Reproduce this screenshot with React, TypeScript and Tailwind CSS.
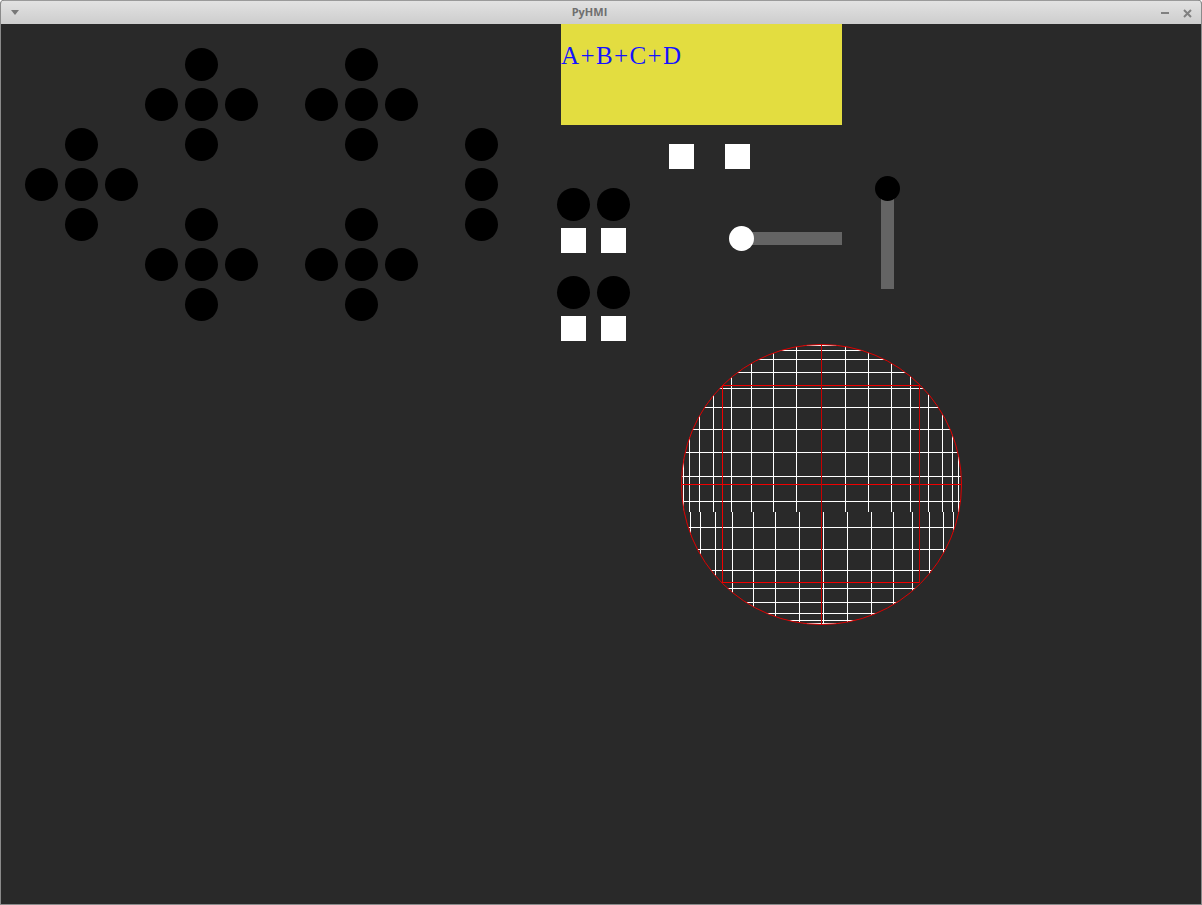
const upperV = [683, 689, 699, 713, 731, 751, 773, 796, 845, 868, 891, 910, 928, 942, 952, 958];
const lowerV = [690, 700, 715, 732, 753, 775, 799, 823, 847, 871, 893, 912, 929, 943, 953];
const whiteH = [345, 350, 359, 372, 388, 407, 429, 452, 476, 501, 527, 549, 570, 588, 602, 613, 620, 623];

function Dot() {
  return <div className="w-[33px] h-[33px] rounded-full bg-black"></div>;
}

function Square() {
  return <div className="w-[25px] h-[25px] bg-white"></div>;
}

function Cross({ className }: { className: string }) {
  return (
    <div className={`absolute grid grid-cols-3 gap-[7px] ${className}`}>
      <div></div>
      <Dot />
      <div></div>
      <Dot />
      <Dot />
      <Dot />
      <div></div>
      <Dot />
      <div></div>
    </div>
  );
}

function ButtonPair({ className }: { className: string }) {
  return (
    <div className={`absolute grid grid-cols-2 gap-[7px] justify-items-center ${className}`}>
      <Dot />
      <Dot />
      <Square />
      <Square />
    </div>
  );
}

// viewBox uses the coordinates of the full window, canvas origin is at 1,24
function Gauge() {
  return (
    <svg className="absolute left-[679px] top-[319px]" width="284" height="284" viewBox="680 343 284 284">
      <defs>
        <clipPath id="dial">
          <circle cx="821.5" cy="484.5" r="140" />
        </clipPath>
      </defs>
      <g clipPath="url(#dial)" shapeRendering="crispEdges" strokeWidth="1">
        {whiteH.map((y) => (
          <line key={y} x1="680" x2="964" y1={y + 0.5} y2={y + 0.5} stroke="#ffffff" />
        ))}
        {upperV.map((x) => (
          <line key={x} x1={x + 0.5} x2={x + 0.5} y1="343" y2="512" stroke="#ffffff" />
        ))}
        {lowerV.map((x) => (
          <line key={x} x1={x + 0.5} x2={x + 0.5} y1="512" y2="627" stroke="#ffffff" />
        ))}
        <line x1="680" x2="964" y1="484.5" y2="484.5" stroke="#f00000" />
        <line x1="722" x2="920" y1="385.5" y2="385.5" stroke="#f00000" />
        <line x1="722" x2="920" y1="582.5" y2="582.5" stroke="#f00000" />
        <line x1="722.5" x2="722.5" y1="385" y2="583" stroke="#f00000" />
        <line x1="919.5" x2="919.5" y1="385" y2="583" stroke="#c80000" />
        <line x1="821.5" x2="821.5" y1="343" y2="627" stroke="#c80000" />
      </g>
      <circle cx="821.5" cy="484.5" r="140" fill="none" stroke="#e00000" strokeWidth="1" />
    </svg>
  );
}

export default function App() {
  return (
    <div className="w-[1202px] h-[905px] flex flex-col overflow-hidden rounded-t-[4px] border border-t-0 border-[#8a8a8a] bg-[#292929] font-['Open_Sans',sans-serif]">
      {/* Title bar */}
      <div className="relative h-[24px] shrink-0 flex items-center justify-center border-t border-[#9a9a9a] bg-gradient-to-b from-[#e2e2e2] to-[#cdcdcd]">
        <div className="absolute left-[10px] top-[9px] w-0 h-0 border-x-[4px] border-t-[5px] border-x-transparent border-t-[#777777]"></div>
        <span className="ml-[-23px] text-[11px] font-bold text-[#6f6f6f]">PyHMI</span>
        <div className="absolute right-[32px] top-[11px] w-[8px] h-[2px] bg-[#808080]"></div>
        <svg className="absolute right-[9px] top-[8px]" width="9" height="9" viewBox="0 0 9 9">
          <path d="M1 1 L8 8 M8 1 L1 8" stroke="#808080" strokeWidth="2" />
        </svg>
      </div>

      {/* Canvas */}
      <div className="relative flex-1">
        <Cross className="left-[144px] top-[24px]" />
        <Cross className="left-[304px] top-[24px]" />
        <Cross className="left-[24px] top-[104px]" />
        <Cross className="left-[144px] top-[184px]" />
        <Cross className="left-[304px] top-[184px]" />

        <div className="absolute left-[464px] top-[104px] flex flex-col gap-[7px]">
          <Dot />
          <Dot />
          <Dot />
        </div>

        <div className="absolute left-[560px] top-0 w-[281px] h-[101px] bg-[#e3dd40] pt-[17px] font-['Liberation_Serif',serif] text-[25px] leading-[30px] tracking-[1.4px] text-[#1414ff]">
          A+B+C+D
        </div>

        <div className="absolute left-[668px] top-[120px] flex gap-[31px]">
          <Square />
          <Square />
        </div>

        <ButtonPair className="left-[556px] top-[164px]" />
        <ButtonPair className="left-[556px] top-[252px]" />

        {/* Horizontal slider */}
        <div className="absolute left-[728px] top-[202px] w-[113px] h-[25px] flex items-center pl-[12px]">
          <div className="w-full h-[13px] bg-[#646464]"></div>
          <div className="absolute left-0 top-0 w-[25px] h-[25px] rounded-full bg-white"></div>
        </div>

        {/* Vertical slider */}
        <div className="absolute left-[874px] top-[152px] w-[25px] h-[113px] flex justify-center pt-[12px]">
          <div className="w-[13px] h-full bg-[#646464]"></div>
          <div className="absolute left-0 top-0 w-[25px] h-[25px] rounded-full bg-black"></div>
        </div>

        <Gauge />
      </div>
    </div>
  );
}
